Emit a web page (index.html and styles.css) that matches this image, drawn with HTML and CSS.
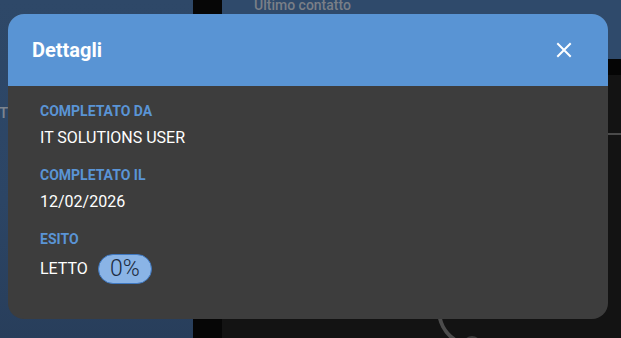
FILE: index.html
```html
<!DOCTYPE html>
<html lang="it">
<head>
<meta charset="utf-8">
<title>Dettagli</title>
<link rel="stylesheet" href="styles.css">
</head>
<body>
<div class="page">
  <aside class="sidebar">
    <div class="side-text">TUTTI</div>
  </aside>
  <div class="strip"></div>
  <main class="main">
    <div class="main-head"><span class="head-text">Ultimo contatto</span></div>
    <div class="main-bar"></div>
    <div class="main-body">
      <div class="rule"></div>
      <svg class="ring" width="80" height="50" viewBox="0 0 80 50"><path d="M19 10 A36 36 0 0 0 34.35 39.49" fill="none" stroke="#4c4c4c" stroke-width="4"/><circle cx="52" cy="45" r="9" fill="#3a3a3a"/></svg>
    </div>
  </main>
</div>

<div class="modal" role="dialog" aria-label="Dettagli">
  <div class="modal-head">
    <h2 class="modal-title">Dettagli</h2>
    <button class="close" aria-label="Chiudi">
      <svg width="16" height="16" viewBox="0 0 16 16"><path d="M2 2 L14 14 M14 2 L2 14" stroke="#ffffff" stroke-width="2" stroke-linecap="square"/></svg>
    </button>
  </div>
  <div class="modal-body">
    <div class="field">
      <div class="label">COMPLETATO DA</div>
      <div class="value">IT SOLUTIONS USER</div>
    </div>
    <div class="field">
      <div class="label">COMPLETATO IL</div>
      <div class="value">12/02/2026</div>
    </div>
    <div class="field">
      <div class="label">ESITO</div>
      <div class="value row">LETTO <span class="chip">0%</span></div>
    </div>
  </div>
</div>
</body>
</html>
```
FILE: styles.css
```css
html, body {
  margin: 0;
  padding: 0;
  width: 621px;
  height: 338px;
  overflow: hidden;
  background: #121212;
  font-family: Roboto, "Liberation Sans", sans-serif;
}
.page {
  display: flex;
  width: 621px;
  height: 338px;
  overflow: hidden;
}
.sidebar {
  width: 193px;
  flex: none;
  background: linear-gradient(180deg, #2e4868 0%, #2c4565 60%, #283e5b 100%);
  padding-top: 104px;
  box-sizing: border-box;
}
.side-text {
  font-size: 15px;
  font-weight: 500;
  color: #7d858f;
  line-height: 18px;
  margin-left: -1px;
}
.strip {
  width: 29px;
  flex: none;
  background: #060606;
}
.main {
  flex: 1;
  display: flex;
  flex-direction: column;
}
.main-head {
  height: 59px;
  background: #2f4a6b;
  padding-left: 32px;
}
.head-text {
  display: block;
  font-size: 14px;
  font-weight: 500;
  line-height: 14px;
  margin-top: -2px;
  color: #7a7f87;
}
.main-bar {
  height: 16px;
  background: #050505;
}
.main-body {
  flex: 1;
  background: #131313;
  position: relative;
  overflow: hidden;
}
.rule {
  margin-top: 58px;
  height: 2px;
  background: #4a4a4a;
}
.ring {
  position: absolute;
  left: 198px;
  top: 225px;
}
.modal {
  position: absolute;
  left: 8px;
  top: 14px;
  width: 600px;
  height: 305px;
  border-radius: 16px;
  overflow: hidden;
  background: #3d3d3d;
}
.modal-head {
  height: 72px;
  background: #5994d4;
  display: flex;
  align-items: center;
  justify-content: space-between;
  padding: 0 24px;
}
.modal-title {
  margin: 0;
  font-size: 20px;
  font-weight: 700;
  color: #ffffff;
  line-height: 24px;
}
.close {
  width: 40px;
  height: 40px;
  border: none;
  background: transparent;
  padding: 0;
  display: flex;
  align-items: center;
  justify-content: center;
}
.modal-body {
  padding: 15px 32px 0 32px;
}
.field + .field {
  margin-top: 15px;
}
.label {
  font-size: 14px;
  font-weight: 700;
  line-height: 20px;
  color: #5a94d5;
  margin-bottom: 5px;
}
.value {
  font-size: 16px;
  line-height: 24px;
  color: #ffffff;
}
.row {
  display: flex;
  align-items: center;
  gap: 10px;
  margin-top: 1px;
}
.chip {
  display: inline-flex;
  align-items: center;
  justify-content: center;
  height: 30px;
  width: 54px;
  box-sizing: border-box;
  border-radius: 15px;
  background: #8ab4e6;
  border: 1px solid #3f78c0;
  color: #1c2b40;
  font-size: 23px;
  font-weight: 300;
}
```
